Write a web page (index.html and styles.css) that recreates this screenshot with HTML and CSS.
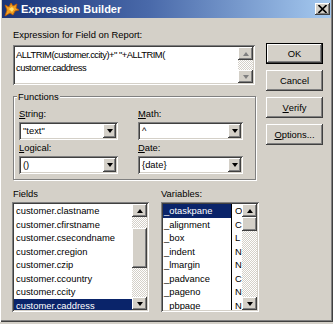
FILE: index.html
```html
<!DOCTYPE html>
<html>
<head>
<meta charset="utf-8">
<link rel="stylesheet" href="styles.css">
</head>
<body>
<div class="window">
  <div class="titlebar">
    <svg class="appicon" width="16" height="16" viewBox="0 0 16 16">
      <path d="M1 15 L3 9 L1 4 L5 6 L7 2 L9 5 L13 3 L12 7 L15 9 L11 10 L9 14 L6 12 Z" fill="#f0a020" stroke="#c05a00" stroke-width="0.8"/>
      <path d="M5 8 L8 6 L10 8 L8 11 Z" fill="#ffe070"/>
    </svg>
    <span class="title">Expression Builder</span>
    <div class="close">
      <svg width="9" height="8" viewBox="0 0 9 8"><path d="M0.5 0 L8.5 8 M8.5 0 L0.5 8" stroke="#000" stroke-width="1.6" fill="none"/></svg>
    </div>
  </div>
  <div class="content">
    <div class="top">
      <div class="main">
        <div class="label">Expression for Field on Report:</div>
        <div class="textarea sunken">
          <div class="ta-text">ALLTRIM(customer.ccity)+" "+ALLTRIM(<br>customer.caddress</div>
          <div class="vscroll">
            <div class="sbtn"><span class="tri up dis"></span></div>
            <div class="track"></div>
            <div class="sbtn"><span class="tri down dis"></span></div>
          </div>
        </div>
        <fieldset class="group">
          <legend>Functions</legend>
          <div class="fgrid">
            <div class="field">
              <div class="label"><u>S</u>tring:</div>
              <div class="combo sunken small"><span class="cval">"text"</span><div class="cbtn"><span class="tri down"></span></div></div>
            </div>
            <div class="field">
              <div class="label"><u>M</u>ath:</div>
              <div class="combo sunken wide"><span class="cval">^</span><div class="cbtn"><span class="tri down"></span></div></div>
            </div>
            <div class="field">
              <div class="label"><u>L</u>ogical:</div>
              <div class="combo sunken small"><span class="cval">()</span><div class="cbtn"><span class="tri down"></span></div></div>
            </div>
            <div class="field">
              <div class="label"><u>D</u>ate:</div>
              <div class="combo sunken wide"><span class="cval">{date}</span><div class="cbtn"><span class="tri down"></span></div></div>
            </div>
          </div>
        </fieldset>
      </div>
      <div class="buttons">
        <div class="btn default">OK</div>
        <div class="btn">Cancel</div>
        <div class="btn"><u>V</u>erify</div>
        <div class="btn"><u>O</u>ptions...</div>
      </div>
    </div>
    <div class="lists">
      <div class="fields-col">
        <div class="label">Fields</div>
        <div class="listbox sunken fields">
          <div class="items">
            <div class="item">customer.clastname</div>
            <div class="item">customer.cfirstname</div>
            <div class="item">customer.csecondname</div>
            <div class="item">customer.cregion</div>
            <div class="item">customer.czip</div>
            <div class="item">customer.ccountry</div>
            <div class="item">customer.ccity</div>
            <div class="item sel">customer.caddress</div>
          </div>
          <div class="vscroll">
            <div class="sbtn"><span class="tri up"></span></div>
            <div class="track t1"></div>
            <div class="thumb th-fields"></div>
            <div class="track t2"></div>
            <div class="sbtn"><span class="tri down"></span></div>
          </div>
        </div>
      </div>
      <div class="vars-col">
        <div class="label">Variables:</div>
        <div class="listbox sunken vars">
          <div class="items names">
            <div class="item sel">_otaskpane</div>
            <div class="item">_alignment</div>
            <div class="item">_box</div>
            <div class="item">_indent</div>
            <div class="item">_lmargin</div>
            <div class="item">_padvance</div>
            <div class="item">_pageno</div>
            <div class="item">_pbpage</div>
          </div>
          <div class="items types">
            <div class="item">O</div>
            <div class="item">C</div>
            <div class="item">L</div>
            <div class="item">N</div>
            <div class="item">N</div>
            <div class="item">C</div>
            <div class="item">N</div>
            <div class="item">N</div>
          </div>
          <div class="vscroll">
            <div class="sbtn"><span class="tri up"></span></div>
            <div class="thumb th-vars"></div>
            <div class="track t2"></div>
            <div class="sbtn"><span class="tri down"></span></div>
          </div>
        </div>
      </div>
    </div>
  </div>
</div>
</body>
</html>
```

FILE: styles.css
```css
* { box-sizing: border-box; }
html, body { margin: 0; padding: 0; }
body {
  width: 333px;
  height: 324px;
  background: #d4d0c8;
  font-family: "Liberation Sans", Arial, sans-serif;
  font-size: 9.4px;
  color: #000;
  overflow: hidden;
}
u { text-decoration: underline; text-underline-offset: 1px; }

.window {
  width: 333px;
  height: 322px;
  background: #d4d0c8;
  box-shadow: inset 1px 0 #fff, inset -1px -1px #404040, inset -2px -2px #808080;
}

.titlebar {
  margin: 0 2px 0 2px;
  height: 18px;
  background: linear-gradient(90deg, #1a3478 0%, #4a6aaa 45%, #a6caf0 100%);
  display: flex;
  align-items: center;
  padding-left: 2px;
}
.appicon { flex: none; }
.title {
  margin-left: 1px;
  color: #fff;
  font-weight: bold;
  font-size: 11px;
  line-height: 18px;
  flex: 1;
}
.close {
  width: 15px;
  height: 12px;
  margin-right: 1px;
  background: #d4d0c8;
  box-shadow: inset -1px -1px #404040, inset 1px 1px #fff, inset -2px -2px #808080;
  display: flex;
  align-items: center;
  justify-content: center;
  padding-bottom: 1px;
}

.content { padding: 10px 0 0 13px; }

.top { display: flex; gap: 10px; }
.main { width: 243px; }
.label { line-height: 13px; height: 13px; white-space: nowrap; }

.sunken {
  background: #fff;
  box-shadow: inset 1px 1px #808080, inset -1px -1px #fff, inset 2px 2px #404040, inset -2px -2px #d4d0c8;
}

.textarea {
  margin-top: 4px;
  width: 242px;
  height: 40px;
  padding: 2px;
  display: flex;
}
.ta-text {
  flex: 1;
  padding: 1px 0 0 1px;
  line-height: 13px;
  letter-spacing: -0.5px;
  white-space: nowrap;
  overflow: hidden;
}

.vscroll {
  width: 15px;
  display: flex;
  flex-direction: column;
  flex: none;
}
.sbtn, .thumb, .cbtn {
  background: #d4d0c8;
  box-shadow: inset -1px -1px #404040, inset 1px 1px #fff, inset -2px -2px #808080;
}
.sbtn {
  height: 13px;
  flex: none;
  display: flex;
  align-items: center;
  justify-content: center;
}
.track {
  flex: 1;
  background: repeating-conic-gradient(#fff 0 25%, #d4d0c8 0 50%) 0 0 / 2px 2px;
}
.tri {
  width: 0;
  height: 0;
  border-left: 3.5px solid transparent;
  border-right: 3.5px solid transparent;
}
.tri.up { border-bottom: 4px solid #000; }
.tri.down { border-top: 4px solid #000; }
.tri.up.dis { border-bottom-color: #808080; }
.tri.down.dis { border-top-color: #808080; }

.group {
  margin: 5px 0 0 0;
  width: 243px;
  padding: 4px 12px 5px 5px;
  border: 1px solid #808080;
  box-shadow: inset 1px 1px #fff, 1px 1px #fff;
}
.group legend {
  padding: 0 1px;
  margin-left: -2px;
  line-height: 13px;
  background: #d4d0c8;
}
.fgrid {
  display: grid;
  grid-template-columns: 99px 105px;
  column-gap: 20px;
  row-gap: 1px;
}
.field .label { margin-bottom: 2px; }
.combo {
  height: 18px;
  padding: 2px;
  display: flex;
  align-items: center;
}
.cval { flex: 1; padding-left: 2px; line-height: 14px; }
.cbtn {
  width: 13px;
  height: 14px;
  display: flex;
  align-items: center;
  justify-content: center;
}

.buttons {
  margin-top: 15px;
  display: flex;
  flex-direction: column;
  gap: 6px;
}
.btn {
  width: 57px;
  height: 21px;
  display: flex;
  align-items: center;
  justify-content: center;
  background: #d4d0c8;
  box-shadow: inset -1px -1px #404040, inset 1px 1px #fff, inset -2px -2px #808080;
}
.btn.default {
  box-shadow: inset 0 0 0 1px #000, inset -2px -2px #404040, inset 2px 2px #fff, inset -3px -3px #808080;
}

.lists {
  display: flex;
  margin-top: 7px;
  margin-left: -1px;
}
.fields-col { width: 149px; }
.fields-col .label { padding-left: 1px; }
.vars-col .label { margin-bottom: 2px; }
.fields-col .label { margin-bottom: 2px; }
.listbox {
  height: 110px;
  padding: 2px;
  display: flex;
  overflow: hidden;
}
.fields { width: 137px; }
.vars { width: 98px; }
.items { line-height: 13.5px; white-space: nowrap; overflow: hidden; }
.fields .items { flex: 1; }
.fields .item { padding-left: 2px; }
.item.sel { background: #0a246a; color: #fff; }
.names { width: 69px; flex: none; border-right: 1px solid #000; }
.names .item { padding-left: 1px; }
.types { width: 10px; flex: none; }
.types .item { padding-left: 3px; }
.thumb { flex: none; }
.th-fields { height: 40px; }
.fields .t1 { flex: none; height: 11px; }
.th-vars { height: 14px; }
```
